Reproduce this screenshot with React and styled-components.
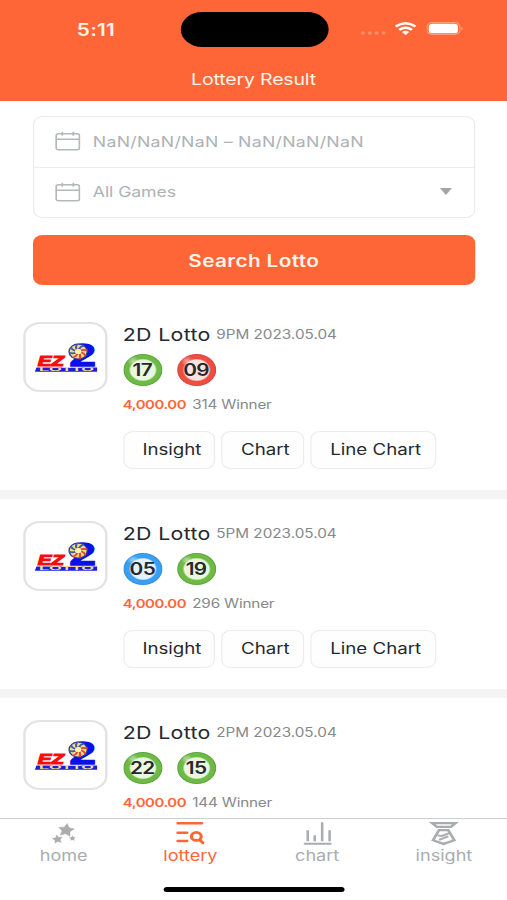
import React from 'react';
import styled, { createGlobalStyle } from 'styled-components';

const orange = '#ff6637';
const screenWidth = 415;

const GlobalStyle = createGlobalStyle`
  * {
    box-sizing: border-box;
  }

  body {
    margin: 0;
    background: #fff;
    overflow: hidden;
  }
`;

// the layout is narrower than the window and widened to fill it
const Screen = styled.div`
  display: flex;
  flex-direction: column;
  width: ${screenWidth}px;
  height: 900px;
  overflow: hidden;
  background: #fff;
  color: #26282b;
  font-family: Inter, 'Liberation Sans', sans-serif;
  transform: scaleX(${507 / screenWidth});
  transform-origin: 0 0;
`;

const Header = styled.header`
  flex-shrink: 0;
  height: 100.5px;
  background: ${orange};
  color: #fff3ea;
`;

const StatusBar = styled.div`
  display: grid;
  grid-template-columns: 147.6px 121px 1fr;
  align-items: center;
  height: 59px;
`;

const Clock = styled.div`
  padding-left: 9.5px;
  text-align: center;
  font-size: 17px;
  font-weight: 600;
  line-height: 20px;
  letter-spacing: 0.2px;
`;

const Island = styled.div`
  height: 35px;
  border-radius: 18px;
  background: #000;
`;

const StatusIcons = styled.div`
  display: flex;
  align-items: center;
  padding-left: 26px;
  padding-bottom: 2px;
`;

const SignalDots = styled.svg`
  width: 21px;
  height: 4px;
  margin: 9px 7.5px 0 0;
  fill: #ff8f69;
`;

const WifiIcon = styled.svg`
  width: 18px;
  height: 13px;
  margin-right: 7.5px;
`;

const BatteryIcon = styled.svg`
  width: 31px;
  height: 13px;
`;

const Title = styled.h1`
  margin: 10px 0 0;
  text-align: center;
  font-size: 16px;
  font-weight: 400;
  line-height: 21px;
  letter-spacing: -0.15px;
`;

const Content = styled.main`
  flex: 1;
  min-height: 0;
  overflow: hidden;
`;

const SearchForm = styled.div`
  padding: 15px 26.5px 0 27px;
`;

const FieldGroup = styled.div`
  height: 102px;
  border: 1.3px solid #e9ebec;
  border-radius: 8px;
`;

const Field = styled.div`
  display: flex;
  align-items: center;
  height: 50px;
  padding: 0 17.5px 1px 16.5px;
  color: #aeb2b5;
  font-size: 14.5px;

  & + & {
    border-top: 1.3px solid #e9ebec;
  }
`;

const CalendarIcon = styled.svg`
  width: 21px;
  height: 20px;
  margin-right: 10.5px;
  fill: none;
  stroke: #b4b8ba;
  stroke-width: 1.4;
`;

const FieldText = styled.span`
  flex: 1;
  letter-spacing: ${(props) => props.$spacing || 'normal'};
`;

const Caret = styled.span`
  border: 5.5px solid transparent;
  border-top: 7px solid #a3a6a8;
  border-bottom: 0;
`;

const SearchButton = styled.button`
  display: block;
  width: 100%;
  height: 50px;
  margin-top: 17.5px;
  padding: 0;
  border: 0;
  border-radius: 8px;
  background: ${orange};
  color: #fff3ea;
  font: 600 17px/52px Inter, sans-serif;
  letter-spacing: 0.3px;
`;

const Results = styled.div`
  margin-top: 14.6px;
`;

const Card = styled.section`
  display: flex;
  height: 199px;
  padding: 22px 18px 0 18.5px;
  border-bottom: 9px solid #f4f4f5;
`;

const LogoBox = styled.div`
  flex-shrink: 0;
  width: 69px;
  height: 70px;
  margin-right: 13px;
  border: 2px solid #e3e3e4;
  border-radius: 14px;

  & > svg {
    display: block;
    width: 65px;
    height: 66px;
  }
`;

const CardBody = styled.div`
  flex: 1;
`;

const GameLine = styled.div`
  display: flex;
  align-items: center;
  height: 26px;
  gap: 4.5px;
`;

const GameName = styled.span`
  font-size: 17.5px;
  letter-spacing: 0.25px;
`;

const DrawTime = styled.span`
  color: #85898c;
  font-size: 12.5px;
`;

const Balls = styled.div`
  display: flex;
  gap: 12px;
  margin-top: 6px;
`;

const ballColors = {
  green: { rim: '#6dba45', edge: '#559c33', core: '#eaf7df' },
  red: { rim: '#f04d41', edge: '#cf4037', core: '#fce3df' },
  blue: { rim: '#389ff2', edge: '#2c88d4', core: '#e3f2fd' },
};

const BallCircle = styled.div`
  display: flex;
  align-items: center;
  justify-content: center;
  width: 32px;
  height: 32px;
  border-radius: 50%;
  background: radial-gradient(
      circle at 25% 22%,
      rgba(255, 255, 255, 0.5) 0,
      rgba(255, 255, 255, 0) 5px
    ),
    radial-gradient(
      circle,
      ${(props) => props.$colors.core} 0 10px,
      ${(props) => props.$colors.rim} 11.5px 14.5px,
      ${(props) => props.$colors.edge} 16px
    );
  font-size: 17px;
  font-weight: 600;
  letter-spacing: -0.5px;
`;

const PrizeLine = styled.div`
  display: flex;
  align-items: center;
  gap: 5px;
  height: 18px;
  margin-top: 9.5px;
  color: #85898c;
  font-size: 12.5px;
  letter-spacing: -0.15px;
`;

const Prize = styled.span`
  color: ${orange};
  font-size: 12.2px;
  font-weight: 600;
  letter-spacing: -0.35px;
`;

const Actions = styled.div`
  display: flex;
  gap: 5px;
  margin-top: 17.5px;
`;

const ActionButton = styled.button`
  width: ${(props) => props.$width}px;
  height: 38px;
  padding: 1px 0 0 5px;
  border: 1.3px solid #ececed;
  border-radius: 8px;
  background: #fefefe;
  color: #26282b;
  font: 400 15.3px/24px Inter, sans-serif;
  white-space: nowrap;
`;

const TabBar = styled.nav`
  flex-shrink: 0;
  height: 82px;
  border-top: 1.3px solid #cdced0;
  background: #fff;
`;

const Tabs = styled.div`
  display: grid;
  grid-template-columns: repeat(4, 1fr);
  height: 68px;
`;

const Tab = styled.div`
  display: flex;
  flex-direction: column;
  align-items: center;
  padding: 2px 0 0 0.5px;
  color: ${(props) => (props.$active ? orange : '#a9adb0')};
  font-size: 14.8px;
  line-height: 21px;

  & > svg {
    width: 26px;
    height: 25px;
  }
`;

const HomeIndicator = styled.div`
  width: 148px;
  height: 5px;
  margin: 0 auto;
  border-radius: 3px;
  background: #000;
`;

const Calendar = () => (
  <CalendarIcon viewBox="0 0 21 20">
    <rect x="1" y="2.8" width="19" height="16" rx="1.8" />
    <path d="M1 8.3h19M6 .8v4M15 .8v4" />
  </CalendarIcon>
);

function Ball({ color, value }) {
  return <BallCircle $colors={ballColors[color]}>{value}</BallCircle>;
}

function EzLogo() {
  const blades = [0, 45, 90, 135, 180, 225, 270, 315];
  return (
    <LogoBox>
      <svg viewBox="2 2 65 66">
        <text
          x="38"
          y="44.2"
          textLength="21.5"
          lengthAdjust="spacingAndGlyphs"
          fontFamily="Liberation Sans"
          fontWeight="700"
          fontSize="31.5"
          fill="#0b10e8"
          stroke="#0b10e8"
          strokeWidth="1.4"
        >
          2
        </text>
        <text
          x="12"
          y="44"
          textLength="21.5"
          lengthAdjust="spacingAndGlyphs"
          fontFamily="Liberation Sans"
          fontWeight="700"
          fontStyle="italic"
          fontSize="14.5"
          fill="#f70d0d"
          stroke="#f70d0d"
          strokeWidth="1.1"
        >
          EZ
        </text>
        <circle cx="45" cy="29.6" r="8" fill="#2a3a9c" />
        <circle cx="45" cy="29.6" r="6.9" fill="#f3dd80" />
        {blades.map((angle) => (
          <path
            key={angle}
            d="M45.5 27.4q1.4-3 4.2-3.9"
            transform={`rotate(${angle} 45 29.6)`}
            fill="none"
            stroke={angle > 0 && angle < 225 ? '#dc4438' : '#4658a8'}
            strokeWidth="1.7"
          />
        ))}
        <circle cx="45" cy="29.6" r="2.6" fill="#fbf2b0" />
        <path d="M10.8 45.4H60.5V49.8H9.5z" fill="#1a1ed8" />
        <text
          x="13"
          y="49.3"
          textLength="45"
          lengthAdjust="spacingAndGlyphs"
          fontFamily="Liberation Sans"
          fontWeight="700"
          fontSize="4.8"
          fill="#f3dc8b"
        >
          LOTTO
        </text>
      </svg>
    </LogoBox>
  );
}

function ResultCard({ time, balls, winners }) {
  return (
    <Card>
      <EzLogo />
      <CardBody>
        <GameLine>
          <GameName>2D Lotto</GameName>
          <DrawTime>{time} 2023.05.04</DrawTime>
        </GameLine>
        <Balls>
          {balls.map(([color, value]) => (
            <Ball key={value} color={color} value={value} />
          ))}
        </Balls>
        <PrizeLine>
          <Prize>4,000.00</Prize>
          <span>{winners} Winner</span>
        </PrizeLine>
        <Actions>
          <ActionButton $width={75.5}>Insight</ActionButton>
          <ActionButton $width={67.5}>Chart</ActionButton>
          <ActionButton $width={103}>Line Chart</ActionButton>
        </Actions>
      </CardBody>
    </Card>
  );
}

const star =
  'M0-6.4L2-2.4 6.4-1.8 3.3 1.5 4 6 0 4-4 6-3.3 1.5-6.4-1.8-2-2.4z';

const HomeIcon = () => (
  <svg
    viewBox="0 0 26 25"
    fill="currentColor"
    stroke="currentColor"
    strokeWidth=".4"
    strokeLinejoin="round"
  >
    <path d={star} transform="translate(15.2 8.8) rotate(8)" />
    <path d={star} transform="translate(8 18) rotate(-8) scale(.65)" />
    <path d={star} transform="translate(20.3 17.2) scale(.4)" />
  </svg>
);

const LotteryIcon = () => (
  <svg
    viewBox="0 0 26 25"
    fill="none"
    stroke="currentColor"
    strokeWidth="2.6"
    strokeLinecap="round"
  >
    <path d="M2.6 2.3h19.6M2.6 11.8h7.4M2.6 20h7.4" />
    <circle cx="17.7" cy="15.4" r="4" />
    <path d="M20.6 18.9l2.4 3" />
  </svg>
);

const ChartIcon = () => (
  <svg viewBox="0 0 26 25" fill="none" stroke="currentColor" strokeWidth="2.1">
    <path d="M1.7 22.7h22.6M4.9 20.3V9.3M10.6 20.3v-6M16.7 20.3V1.3M22.8 20.3v-11" />
  </svg>
);

const InsightIcon = () => (
  <svg viewBox="0 0 26 25" fill="none" stroke="currentColor" strokeWidth="2.3">
    <path d="M3.8 2.2h19l-3.8 3.6H7.6z" />
    <path d="M9.3 9.2h7.6l5 10-8.8 3.7-8.6-3.7z" />
    <path d="M8 14.4l3.6.5 5.8-2.6M9.4 18.9l7.6-3.6" strokeWidth="1.9" />
  </svg>
);

const results = [
  { time: '9PM', balls: [['green', '17'], ['red', '09']], winners: 314 },
  { time: '5PM', balls: [['blue', '05'], ['green', '19']], winners: 296 },
  { time: '2PM', balls: [['green', '22'], ['green', '15']], winners: 144 },
];

const tabs = [
  { label: 'home', Icon: HomeIcon },
  { label: 'lottery', Icon: LotteryIcon, active: true },
  { label: 'chart', Icon: ChartIcon },
  { label: 'insight', Icon: InsightIcon },
];

function App() {
  return (
    <>
      <GlobalStyle />
      <Screen>
        <Header>
          <StatusBar>
            <Clock>5:11</Clock>
            <Island />
            <StatusIcons>
              <SignalDots viewBox="0 0 21 4">
                <circle cx="2" cy="2" r="1.7" />
                <circle cx="7.7" cy="2" r="1.7" />
                <circle cx="13.3" cy="2" r="1.7" />
                <circle cx="19" cy="2" r="1.7" />
              </SignalDots>
              <WifiIcon
                viewBox="0 0 18 13"
                fill="none"
                stroke="#fff"
                strokeWidth="2.4"
              >
                <path d="M.9 4.5Q9-2 17.1 4.5M3.8 7.8Q9 3.5 14.2 7.8" />
                <path d="M6 10Q9 7.6 12 10L9 13z" fill="#fff" stroke="none" />
              </WifiIcon>
              <BatteryIcon viewBox="0 0 31 13">
                <rect
                  x=".6"
                  y=".6"
                  width="26.8"
                  height="11.8"
                  rx="4"
                  fill="none"
                  stroke="#ff9d7c"
                />
                <rect x="2" y="1.7" width="23.8" height="9.6" rx="2.9" fill="#fff" />
                <path d="M28.8 4.5q1.8 2 0 4z" fill="#ffae91" />
              </BatteryIcon>
            </StatusIcons>
          </StatusBar>
          <Title>Lottery Result</Title>
        </Header>
        <Content>
          <SearchForm>
            <FieldGroup>
              <Field>
                <Calendar />
                <FieldText $spacing="0.22px">NaN/NaN/NaN – NaN/NaN/NaN</FieldText>
              </Field>
              <Field>
                <Calendar />
                <FieldText $spacing="-0.1px">All Games</FieldText>
                <Caret />
              </Field>
            </FieldGroup>
            <SearchButton>Search Lotto</SearchButton>
          </SearchForm>
          <Results>
            {results.map((result) => (
              <ResultCard key={result.time} {...result} />
            ))}
          </Results>
        </Content>
        <TabBar>
          <Tabs>
            {tabs.map(({ label, Icon, active }) => (
              <Tab key={label} $active={active}>
                <Icon />
                {label}
              </Tab>
            ))}
          </Tabs>
          <HomeIndicator />
        </TabBar>
      </Screen>
    </>
  );
}

export default App;
